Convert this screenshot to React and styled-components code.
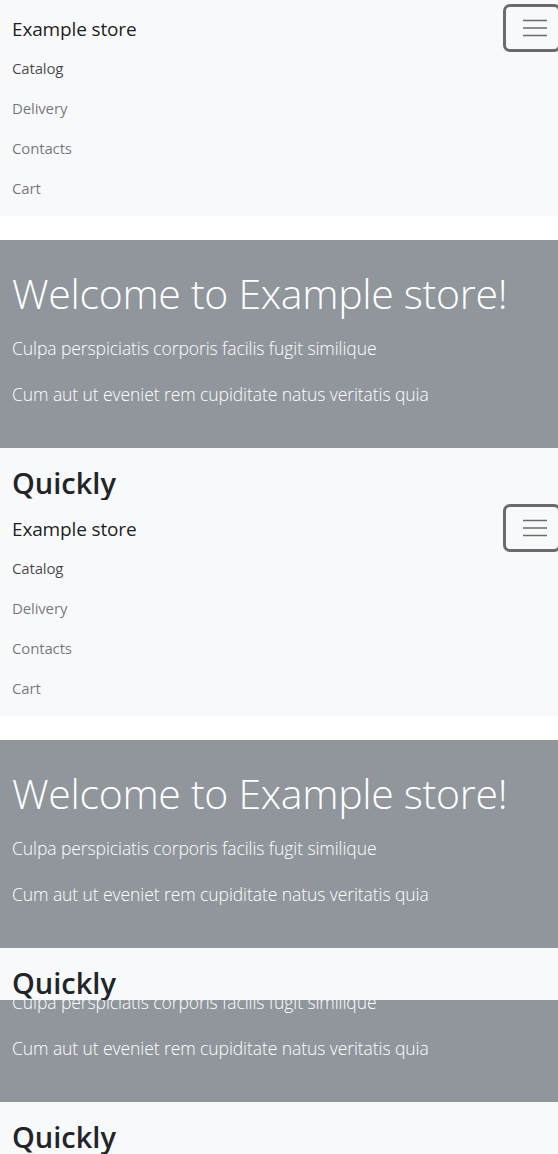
import React from "react";
import styled, { createGlobalStyle } from "styled-components";

const GlobalStyle = createGlobalStyle`
  html, body {
    margin: 0;
    padding: 0;
    overflow-x: hidden;
    background: #ffffff;
  }
  body {
    font-family: "Open Sans", "Noto Sans", sans-serif;
    color: #212529;
  }
`;

const Nav = styled.nav`
  background: #f8f9fa;
  padding: 0 0 8px 12px;
  margin-bottom: 24px;
`;

const TopRow = styled.div`
  display: flex;
  justify-content: space-between;
  align-items: flex-start;
  height: 48px;
`;

const Brand = styled.a`
  display: block;
  margin-top: 14px;
  font-size: 19px;
  letter-spacing: -0.15px;
  line-height: 30px;
  color: rgba(0, 0, 0, 0.9);
  text-decoration: none;
`;

const Toggler = styled.button`
  box-sizing: border-box;
  width: 58px;
  height: 48px;
  margin-top: 4px;
  margin-right: -3px;
  flex-shrink: 0;
  border: 3px solid #6b6b6b;
  border-radius: 7px;
  background: transparent;
  padding: 0 0 0 17px;
  display: flex;
  align-items: center;
`;

const NavList = styled.ul`
  list-style: none;
  margin: 0;
  padding: 0;
`;

const NavLink = styled.a`
  display: block;
  font-size: 15px;
  letter-spacing: -0.15px;
  line-height: 24px;
  padding: 8px 0;
  text-decoration: none;
  color: ${(p) => (p.$active ? "rgba(0,0,0,0.72)" : "rgba(0,0,0,0.55)")};
`;

const Jumbo = styled.section`
  background: #90969c;
  color: #fff;
  padding: 24px 12px 23px;
`;

const Title = styled.h1`
  margin: 0 0 11px;
  font-size: 41px;
  letter-spacing: -0.3px;
  line-height: 58px;
  font-weight: 300;
  white-space: nowrap;
`;

const Lead = styled.p`
  margin: 0 0 16px;
  font-size: 17.5px;
  letter-spacing: -0.08px;
  line-height: 30px;
  font-weight: 300;
  white-space: nowrap;
`;

const Clip = styled.div`
  height: ${(p) => p.$height}px;
  overflow: hidden;
`;

const Shift = styled.div`
  margin-top: ${(p) => -p.$offset}px;
`;

const Quick = styled.section`
  background: #f8f9fa;
  height: 52px;
  overflow: hidden;
  padding: 16px 12px 0;
  box-sizing: border-box;
`;

const QuickTitle = styled.h2`
  margin: 0;
  font-size: 29px;
  line-height: 38px;
  font-weight: 600;
  color: #212529;
`;

const links = ["Catalog", "Delivery", "Contacts", "Cart"];

function MenuIcon() {
  return (
    <svg width="24" height="18" viewBox="0 0 24 18">
      <path
        d="M0 1.5h24M0 9h24M0 16.5h24"
        stroke="#6b6b6b"
        strokeWidth="1.6"
        fill="none"
      />
    </svg>
  );
}

function Navbar() {
  return (
    <Nav>
      <TopRow>
        <Brand href="#">Example store</Brand>
        <Toggler aria-label="Toggle navigation">
          <MenuIcon />
        </Toggler>
      </TopRow>
      <NavList>
        {links.map((l, i) => (
          <li key={l}>
            <NavLink href="#" $active={i === 0}>
              {l}
            </NavLink>
          </li>
        ))}
      </NavList>
    </Nav>
  );
}

function Welcome() {
  return (
    <Jumbo>
      <Title>Welcome to Example store!</Title>
      <Lead>Culpa perspiciatis corporis facilis fugit similique</Lead>
      <Lead>Cum aut ut eveniet rem cupiditate natus veritatis quia</Lead>
    </Jumbo>
  );
}

function Quickly() {
  return (
    <Quick>
      <QuickTitle>Quickly</QuickTitle>
    </Quick>
  );
}

export default function App() {
  return (
    <>
      <GlobalStyle />
      <Navbar />
      <Welcome />
      <Quickly />
      <Navbar />
      <Welcome />
      <Quickly />
      <Clip $height={102}>
        <Shift $offset={106}>
          <Welcome />
        </Shift>
      </Clip>
      <Quickly />
    </>
  );
}
